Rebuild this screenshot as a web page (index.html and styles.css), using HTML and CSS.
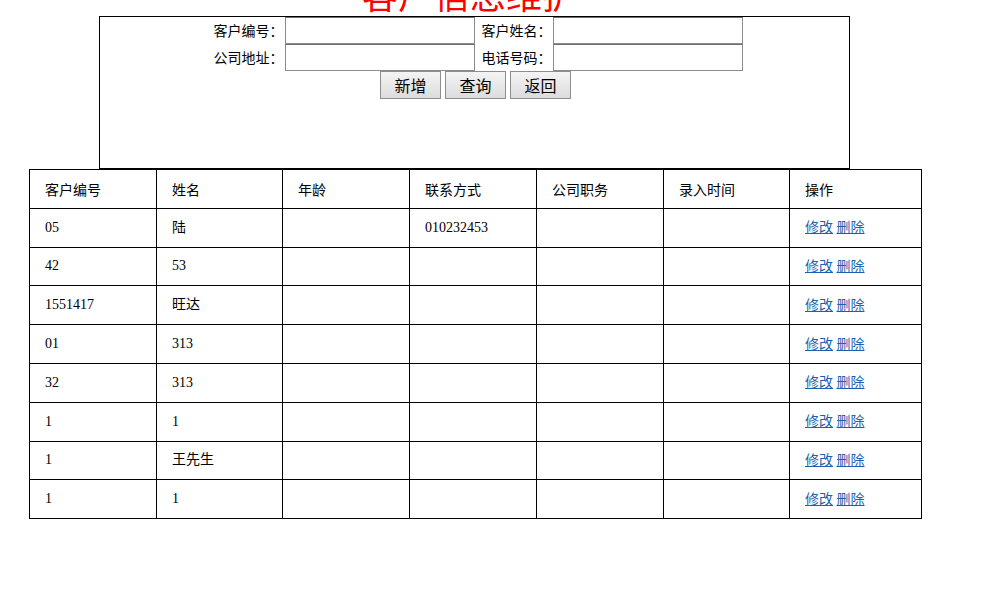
FILE: index.html
```html
<!DOCTYPE html>
<html lang="zh-CN">
<head>
<meta charset="utf-8">
<title>客户信息维护</title>
<link rel="stylesheet" href="styles.css">
</head>
<body>
<div class="page">
  <h1 class="title">客户信息维护</h1>
  <div class="search-box">
    <table class="search-form">
      <tr>
        <td class="label">客户编号：</td>
        <td><input class="field" type="text"></td>
        <td class="label">客户姓名：</td>
        <td><input class="field" type="text"></td>
      </tr>
      <tr>
        <td class="label">公司地址：</td>
        <td><input class="field" type="text"></td>
        <td class="label">电话号码：</td>
        <td><input class="field" type="text"></td>
      </tr>
    </table>
    <div class="actions">
      <button class="btn" type="button">新增</button>
      <button class="btn" type="button">查询</button>
      <button class="btn" type="button">返回</button>
    </div>
  </div>
  <table class="grid">
    <colgroup>
      <col class="c1"><col class="c2"><col class="c3"><col class="c4"><col class="c5"><col class="c6"><col class="c7">
    </colgroup>
    <tr class="head">
      <td>客户编号</td><td>姓名</td><td>年龄</td><td>联系方式</td><td>公司职务</td><td>录入时间</td><td>操作</td>
    </tr>
    <tr><td>05</td><td>陆</td><td></td><td>010232453</td><td></td><td></td><td><a href="#">修改</a> <a href="#">删除</a></td></tr>
    <tr><td>42</td><td>53</td><td></td><td></td><td></td><td></td><td><a href="#">修改</a> <a href="#">删除</a></td></tr>
    <tr><td>1551417</td><td>旺达</td><td></td><td></td><td></td><td></td><td><a href="#">修改</a> <a href="#">删除</a></td></tr>
    <tr><td>01</td><td>313</td><td></td><td></td><td></td><td></td><td><a href="#">修改</a> <a href="#">删除</a></td></tr>
    <tr><td>32</td><td>313</td><td></td><td></td><td></td><td></td><td><a href="#">修改</a> <a href="#">删除</a></td></tr>
    <tr><td>1</td><td>1</td><td></td><td></td><td></td><td></td><td><a href="#">修改</a> <a href="#">删除</a></td></tr>
    <tr><td>1</td><td>王先生</td><td></td><td></td><td></td><td></td><td><a href="#">修改</a> <a href="#">删除</a></td></tr>
    <tr><td>1</td><td>1</td><td></td><td></td><td></td><td></td><td><a href="#">修改</a> <a href="#">删除</a></td></tr>
  </table>
</div>
</body>
</html>
```

FILE: styles.css
```css
html, body {
  margin: 0;
  padding: 0;
  background: #fff;
}
body {
  font-family: "Liberation Serif", "Noto Sans CJK SC", serif;
  font-size: 14px;
  color: #000;
  overflow: hidden;
}
.page {
  padding-left: 29px;
  width: 892px;
}
.title {
  margin: -30px 0 0 0;
  height: 46px;
  line-height: 46px;
  text-align: center;
  font-family: "Noto Sans CJK SC", sans-serif;
  font-size: 36px;
  font-weight: normal;
  color: #ff0000;
  padding-right: 10px;
}
.search-box {
  margin-left: 70px;
  width: 749px;
  height: 151px;
  border: 1px solid #000;
  display: flex;
  flex-direction: column;
  align-items: center;
}
.search-form {
  border-collapse: collapse;
}
.search-form td {
  padding: 0;
  height: 27px;
}
.search-form .label {
  font-family: "Noto Sans CJK SC", sans-serif;
  font-size: 14px;
  text-align: right;
  padding-right: 1px;
  padding-left: 7px;
  line-height: 27px;
}
.field {
  display: block;
  box-sizing: border-box;
  width: 190px;
  height: 27px;
  margin: 0;
  border: 1px solid #8c8c8c;
  border-top: 1px solid #6e6e6e;
  background: #fff;
}
.actions {
  display: flex;
  gap: 4px;
  margin-top: 0;
  padding-left: 2px;
}
.btn {
  box-sizing: border-box;
  width: 61px;
  height: 28px;
  margin: 0;
  padding: 0;
  border: 1px solid #8e8e8e;
  background: linear-gradient(#f4f4f4, #dcdcdc);
  font-family: "Noto Sans CJK SC", sans-serif;
  font-size: 16px;
  color: #000;
}
.grid {
  border-collapse: collapse;
  table-layout: fixed;
  width: 892px;
}
.c1 { width: 127px; }
.c2 { width: 126px; }
.c3 { width: 127px; }
.c4 { width: 127px; }
.c5 { width: 127px; }
.c6 { width: 126px; }
.c7 { width: 132px; }
.grid td {
  border: 1px solid #000;
  height: 37.8px;
  line-height: 20px;
  padding: 0 0 0 15px;
  vertical-align: middle;
  white-space: nowrap;
}
.grid .head td {
  font-family: "Noto Sans CJK SC", sans-serif;
}
.grid a {
  color: #1f5fb0;
  text-decoration: underline;
  font-family: "Noto Sans CJK SC", sans-serif;
  vertical-align: 1px;
}
```
